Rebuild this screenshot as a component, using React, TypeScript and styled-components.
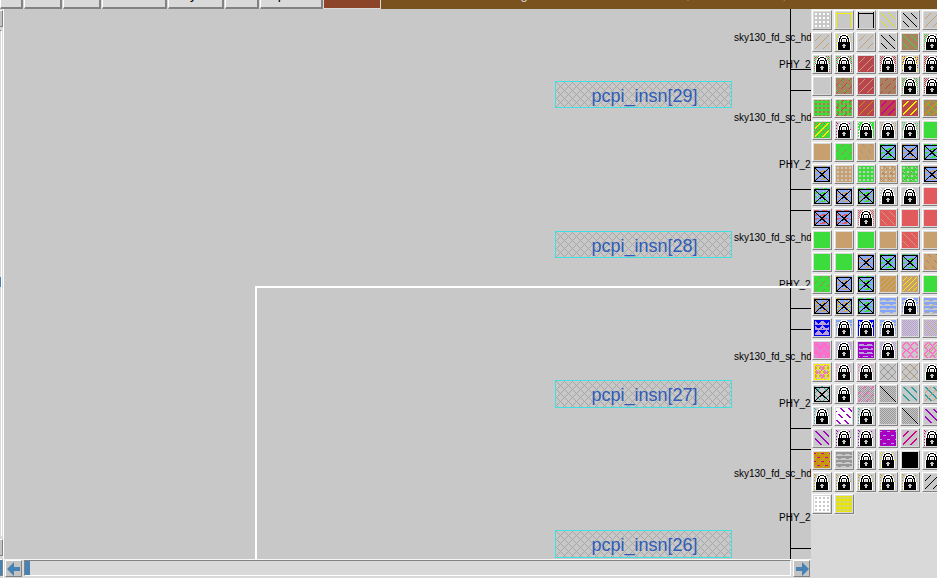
import React from "react";
import styled, { createGlobalStyle } from "styled-components";

const GlobalStyle = createGlobalStyle`
  * { box-sizing: border-box; }
  body {
    margin: 0;
    overflow: hidden;
    background: #d9d9d9;
    font-family: "Liberation Sans", Arial, sans-serif;
  }
  button { margin: 0; padding: 0; font: inherit; }
`;

const Page = styled.main`
  display: flex;
  flex-direction: column;
  height: 100vh;
  overflow: hidden;
`;

const TopBar = styled.header`
  display: flex;
  flex: none;
  height: 9px;
  background: #d9d9d9;
`;

const MenuButton = styled.button<{ $width: number }>`
  display: flex;
  flex: none;
  align-items: flex-end;
  justify-content: center;
  width: ${(p) => p.$width}px;
  height: 9px;
  margin-right: 1px;
  padding-bottom: 5px;
  overflow: hidden;
  border: 0 solid #828282;
  border-left: 1px solid #fff;
  border-right-width: 2px;
  border-bottom-width: 2px;
  background: #d9d9d9;
  color: #000;
  font-size: 14px;
  line-height: 16px;
`;

const LockState = styled.div`
  flex: none;
  width: 56px;
  margin-right: 1px;
  border-bottom: 1px solid #d9d9d9;
  background: #8c4528;
`;

const Title = styled.div`
  display: flex;
  flex: 1;
  align-items: flex-end;
  height: 9px;
  padding-bottom: 7px;
  overflow: hidden;
  background: #7a521e;
  color: #d9d9d9;
  font-size: 13px;
  line-height: 15px;
  white-space: nowrap;
`;

const TitleField = styled.span<{ $gap: number }>`
  margin-left: ${(p) => p.$gap}px;
`;

const Body = styled.div`
  display: flex;
  flex: 1;
  min-height: 0;
`;

const SideBar = styled.div`
  display: flex;
  flex: none;
  flex-direction: column;
  width: 4px;
  padding: 1px 0 2px;
  gap: 3px;
  border-right: 1px solid #fff;
  background: #d9d9d9;
`;

const SideButton = styled.button<{ $active?: boolean }>`
  flex: none;
  height: 17px;
  border: 0 solid #828282;
  border-right-width: 1px;
  border-bottom-width: 1px;
  border-top: 1px solid #fff;
  background: ${(p) => (p.$active ? "#4682b4" : "#c3c3c3")};
`;

const SideTrough = styled.div`
  display: flex;
  flex: 1;
  align-items: center;
  margin-right: 1px;
  padding-bottom: 4px;
  border-top: 1px solid #828282;
  border-right: 1px solid #fff;
`;

const SideThumb = styled.div`
  width: 1px;
  height: 10px;
  background: #4682b4;
`;

const Work = styled.section`
  display: flex;
  flex: 1;
  flex-direction: column;
  min-width: 0;
`;

const Canvas = styled.div`
  position: relative;
  flex: 1;
  overflow: hidden;
  background: #c8c8c8;
`;

const PinSvg = styled.svg`
  position: absolute;
  inset: 0;
  width: 100%;
  height: 100%;
`;

const Pin = styled.div<{ $top: number; $height: number }>`
  position: absolute;
  top: ${(p) => p.$top}px;
  left: 551px;
  width: 177px;
  height: ${(p) => p.$height}px;
  border: 1px solid #40e0e0;
`;

const PinText = styled.span`
  position: relative;
  display: block;
  padding-left: 2px;
  color: #2e5cb8;
  font-size: 18px;
  line-height: 28px;
  text-align: center;
`;

const CellText = styled.span<{ $left: number; $top: number }>`
  position: absolute;
  left: ${(p) => p.$left}px;
  top: ${(p) => p.$top}px;
  color: #000;
  font-size: 10px;
  line-height: 12px;
  white-space: nowrap;
`;

const RowEdge = styled.div<{ $top: number }>`
  position: absolute;
  top: ${(p) => p.$top}px;
  left: 786px;
  right: 0;
  height: 1px;
  background: #000;
`;

const ColumnEdge = styled.div`
  position: absolute;
  top: 0;
  bottom: 0;
  left: 786px;
  width: 1px;
  background: #000;
`;

const Cursor = styled.div`
  position: absolute;
  top: 277px;
  left: 251px;
  right: 0;
  bottom: 0;
  border-top: 2px solid #fff;
  border-left: 2px solid #fff;
`;

const ScrollBar = styled.div`
  display: flex;
  flex: none;
  gap: 2px;
  height: 19px;
  padding: 0 1px;
  border-top: 1px solid #f8f8f8;
  background: #d9d9d9;
`;

const ArrowButton = styled.button`
  display: grid;
  flex: none;
  place-items: center;
  width: 17px;
  height: 17px;
  border: 1px solid;
  border-color: #fff #828282 #828282 #fff;
  background: #c3c3c3;
`;

const Trough = styled.div`
  flex: 1;
  height: 16px;
  border: 1px solid;
  border-color: #828282 #fff #fff #828282;
  background: #d9d9d9;
`;

const Thumb = styled.div`
  width: 5px;
  height: 14px;
  background: #4682b4;
`;

const Palette = styled.aside`
  display: grid;
  flex: none;
  grid-template-columns: repeat(6, 20px);
  grid-auto-rows: 20px;
  gap: 2px;
  width: 126px;
  padding: 1px 0 0 1px;
  overflow: hidden;
  background: #d9d9d9;
`;

const LayerButton = styled.button`
  display: block;
  width: 20px;
  height: 20px;
  padding: 1px;
  border: 1px solid;
  border-color: #fff #828282 #828282 #fff;
  background: #d9d9d9;
  box-shadow: 0 0 0 1px #e6e6e6;

  svg {
    display: block;
    background: #c8c8c8;
  }
`;

const colors: Record<string, string> = {
  gray: "#c8c8c8", dim: "#969696", white: "#ffffff", black: "#000000",
  yellow: "#f0f000", olive: "#e6e600", tan: "#c8a070", brown: "#a98060",
  green: "#3cdc3c", rose: "#b9464e", red: "#e05a5e", gold: "#c8960a",
  magenta: "#d2008c", blue: "#82a5fa", deep: "#0000f0", lilac: "#b9a0dc",
  purple: "#a000c8", pink: "#ff6ec8", teal: "#28a0a0", sky: "#88aaff",
};

const inner = (x: number, y: number) => x > 0 && x < 15 && y > 0 && y < 15;

const patterns: Record<string, (x: number, y: number) => boolean> = {
  fill: () => true,
  dots: (x, y) => (x + 1) % 4 > 1 && (y + 1) % 4 > 1,
  spots: (x, y) => (x + 1) % 4 > 1 && (y + 3) % 4 > 1,
  frame: (x, y) => y === 1 || x === 0 || x === 15,
  border: (x, y) => y === 0 || x === 0 || x === 15 || y === 15,
  slash: (x, y) => inner(x, y) && (x + y) % 8 === 7,
  back: (x, y) => inner(x, y) && (x - y + 16) % 8 === 0,
  slash2: (x, y) => inner(x, y) && (x + y) % 8 > 5,
  back2: (x, y) => inner(x, y) && (x - y + 16) % 8 < 2,
  slash6: (x, y) => inner(x, y) && (x + y) % 5 === 0,
  dashS: (x, y) => (x + y) % 8 === 7 && (y % 8 < 3 || x % 8 < 3),
  dashB: (x, y) => (x - y + 20) % 8 === 0 && y % 6 < 3,
  dashB2: (x, y) => (x - y + 20) % 8 < 2 && y % 6 < 4,
  dash: (x, y) => y % 4 === 1 && (x + y) % 8 < 3,
  check: (x, y) => (x + y) % 2 === 0,
  specks: (x, y) => (x + y) % 2 === 0 && (x + y * 3) % 8 < 4,
  specks2: (x, y) => (x + y) % 2 === 0 && (x + y * 3) % 8 > 3,
  sparse: (x, y) => (x * 5 + y * 3 + x * y) % 9 === 0,
  waves: (x, y) => y % 4 < 2 || (y % 4 === 2 && (x + y) % 8 < 3),
  stripes: (x, y) => y % 4 < 2 && (x + y * 2) % 8 < 5,
  hatch: (x, y) => (x + y) % 8 === 7 || (x - y + 16) % 8 === 0,
  rings: (x, y) => {
    const dx = Math.abs((x % 8) - 4);
    const dy = Math.abs((y % 8) - 4);
    return dx + dy > 3 && dx + dy < 6;
  },
  triangles: (x, y) => Math.abs(((x + (y > 7 ? 4 : 0)) % 8) - 4) < 4 - (y % 5),
  diagonal: (x, y) => x === y,
};

function trace(test: (x: number, y: number) => boolean) {
  let d = "";
  for (let y = 0; y < 16; y++) {
    for (let x = 0; x < 16; x++) {
      if (!test(x, y)) continue;
      const start = x;
      while (x < 16 && test(x, y)) x++;
      d += `M${start} ${y}h${x - start}v1h${start - x}z`;
    }
  }
  return d;
}

const traced = Object.fromEntries(
  Object.entries(patterns).map(([name, test]) => [name, trace(test)])
);

const Padlock = () => (
  <>
    <path fill="#fff" d="M5 0h6v1h1v1h1v2h1v4h1v8H1V8h1V4h1V2h1V1h1z" />
    <path
      fill="#000"
      fillRule="evenodd"
      d="M6 1h4v1h2v2h1v4h1v8H2V8h1V4h1V2h2zM6 2v1H5v2H4v3h8V5h-1V3h-1V2z"
    />
    <path fill="#000" d="M6 4h4v1H6zM5 5h1v3H5zM10 5h1v3h-1z" />
    <path fill="#c8c8c8" d="M7 6h2v2H7zM7 10h2v1h1v1H9v2H7v-2H6v-1h1z" />
  </>
);

const Contact = () => (
  <path
    fill="none"
    stroke="#000"
    d="M.5 1.5h15v14H.5zM1 2l14 13M15 2L1 15"
  />
);

const rows: string[][] = [
  ["dots:white", "frame:yellow", "frame:black", "back:olive", "back:black", "slash:tan"],
  ["slash:tan", "sparse:yellow lock", "slash:tan", "back:black", "fill:brown back:green", "specks:green specks2:brown lock"],
  ["specks:green specks2:rose lock", "specks:green specks2:rose lock", "fill:rose slash:tan", "check:rose lock", "check:rose specks2:yellow lock", "check:rose lock"],
  ["", "fill:brown dashB:green dashS:rose", "fill:rose slash:tan", "fill:brown dashS:rose", "specks:green specks2:brown lock", "check:rose lock"],
  ["fill:green spots:red", "fill:green spots:red dashS:rose", "fill:rose slash:gold", "fill:rose slash2:magenta", "fill:rose slash2:yellow", "fill:brown back:green slash2:gold"],
  ["fill:green sparse:red slash2:yellow", "sparse:magenta lock", "fill:green sparse:white lock", "specks:tan lock", "specks:green lock", "fill:green"],
  ["fill:tan", "fill:green dashS:brown", "fill:tan dashB:dim", "fill:sky stripes:green contact", "fill:sky stripes:tan contact", "fill:sky stripes:green contact"],
  ["fill:sky stripes:tan contact", "fill:tan dots:gray", "fill:green dots:gray", "fill:tan dots:gray dashB:brown", "fill:green dots:gray dashS:brown", "fill:sky stripes:tan contact"],
  ["fill:sky stripes:green sparse:gray contact", "fill:sky stripes:tan sparse:gray contact", "fill:sky stripes:green sparse:tan contact", "sparse:white lock", "lock", "fill:red"],
  ["fill:sky stripes:red contact", "fill:sky stripes:red contact", "check:red lock", "fill:red back:tan", "fill:red", "fill:red"],
  ["fill:green", "fill:tan", "fill:green", "fill:tan", "fill:red back:tan", "fill:tan"],
  ["fill:green", "fill:green", "fill:sky stripes:tan contact", "fill:sky stripes:green contact", "fill:sky stripes:green sparse:lilac contact", "fill:tan dashB:brown"],
  ["fill:green dashS:brown", "fill:sky stripes:tan contact", "fill:sky stripes:green contact", "fill:tan slash6:gold", "fill:tan slash6:yellow", "fill:green"],
  ["fill:sky stripes:tan sparse:gold contact", "fill:sky stripes:tan sparse:yellow contact", "fill:sky stripes:green contact", "waves:blue", "waves:blue lock", "waves:blue dashS:tan"],
  ["fill:lilac triangles:deep border:deep", "waves:blue lock", "triangles:deep border:deep lock", "waves:blue lock", "check:lilac", "check:lilac back:tan"],
  ["fill:pink dashB:lilac dashS:lilac", "check:lilac lock", "fill:lilac waves:purple border:purple", "check:lilac lock", "rings:pink", "rings:pink slash:tan"],
  ["rings:pink spots:tan hatch:yellow border:yellow", "sparse:pink lock", "sparse:pink lock", "hatch:dim", "hatch:dim slash:tan", "lock"],
  ["hatch:teal contact", "lock", "check:dim dashS:pink dashB:pink", "check:dim diagonal:black", "back2:teal", "back2:teal slash:tan"],
  ["sparse:teal lock", "fill:white dashB2:purple", "sparse:teal lock", "check:dim", "check:dim diagonal:black", "back2:purple"],
  ["back2:purple", "sparse:purple lock", "sparse:purple lock", "fill:purple sparse:magenta dash:lilac", "slash2:magenta", "sparse:magenta lock"],
  ["fill:gold dash:magenta dashS:tan", "waves:dim", "sparse:dim lock", "sparse:yellow lock", "fill:black", "lock"],
  ["sparse:gold lock", "sparse:gold lock", "sparse:gold lock", "sparse:gold lock", "sparse:gold lock", "slash:black"],
  ["fill:white dots:gray", "fill:olive dots:gray"],
];

function LayerIcon({ spec }: { spec: string }) {
  return (
    <svg width="16" height="16" viewBox="0 0 16 16" shapeRendering="crispEdges">
      {spec.split(" ").filter(Boolean).map((part, i) => {
        if (part === "lock") return <Padlock key={i} />;
        if (part === "contact") return <Contact key={i} />;
        const [name, color] = part.split(":");
        return <path key={i} fill={colors[color]} d={traced[name]} />;
      })}
    </svg>
  );
}

const Arrow = ({ right }: { right?: boolean }) => (
  <svg width="14" height="14" viewBox="0 0 14 14">
    <path fill="#4682b4" d={right ? "M14 7L7 0v5H1v4h6v5z" : "M0 7l7-7v5h6v4H7v5z"} />
  </svg>
);

const menus: [string, number][] = [
  ["File", 23], ["Edit", 38], ["Cell", 38], ["Window", 65],
  ["Layers", 56], ["Drc", 34], ["Options", 63],
];

const pins: [string, number, number][] = [
  ["pcpi_insn[29]", 72, 27], ["pcpi_insn[28]", 222, 27],
  ["pcpi_insn[27]", 371, 28], ["pcpi_insn[26]", 521, 28],
];

const instances = [23, 103, 223, 342, 459];
const fillers = [50, 150, 270, 389, 503];
const rowEdges = [60, 81, 180, 201, 299, 320, 419, 440, 539];

const mesh = Array.from(
  { length: 8 },
  (_, i) => `M${i} ${i}h1v1h-1zM${7 - i} ${(i + 1) % 8}h1v1h-1z`
).join("");

export default function App() {
  return (
    <Page>
      <GlobalStyle />
      <TopBar>
        {menus.map(([label, width]) => (
          <MenuButton key={label} $width={width}>{label}</MenuButton>
        ))}
        <LockState />
        <Title>
          <TitleField $gap={107}>Editing</TitleField>
          <TitleField $gap={126}>0.000, 0.000</TitleField>
          <TitleField $gap={24}>0.000, 0.000</TitleField>
        </Title>
      </TopBar>
      <Body>
        <SideBar>
          <SideButton aria-label="Scroll up" />
          <SideTrough><SideThumb /></SideTrough>
          <SideButton aria-label="Scroll down" />
          <SideButton aria-label="Zoom" $active />
        </SideBar>
        <Work>
          <Canvas>
            <ColumnEdge />
            {rowEdges.map((top) => <RowEdge key={top} $top={top} />)}
            {pins.map(([label, top, height]) => (
              <Pin key={label} $top={top} $height={height}>
                <PinSvg shapeRendering="crispEdges">
                  <defs>
                    <pattern id="mesh" width="8" height="8" patternUnits="userSpaceOnUse">
                      <path fill="#a6a6a6" d={mesh} />
                    </pattern>
                  </defs>
                  <rect width="100%" height="100%" fill="url(#mesh)" />
                </PinSvg>
                <PinText>{label}</PinText>
              </Pin>
            ))}
            {instances.map((top) => (
              <CellText key={top} $left={730} $top={top}>sky130_fd_sc_hd</CellText>
            ))}
            {fillers.map((top) => (
              <CellText key={top} $left={775} $top={top}>PHY_2</CellText>
            ))}
            <Cursor />
          </Canvas>
          <ScrollBar>
            <ArrowButton aria-label="Scroll left"><Arrow /></ArrowButton>
            <Trough><Thumb /></Trough>
            <ArrowButton aria-label="Scroll right"><Arrow right /></ArrowButton>
          </ScrollBar>
        </Work>
        <Palette>
          {rows.flatMap((row, r) =>
            row.map((spec, c) => (
              <LayerButton key={`${r}-${c}`} aria-label={`Layer ${r * 6 + c + 1}`}>
                <LayerIcon spec={spec} />
              </LayerButton>
            ))
          )}
        </Palette>
      </Body>
    </Page>
  );
}
